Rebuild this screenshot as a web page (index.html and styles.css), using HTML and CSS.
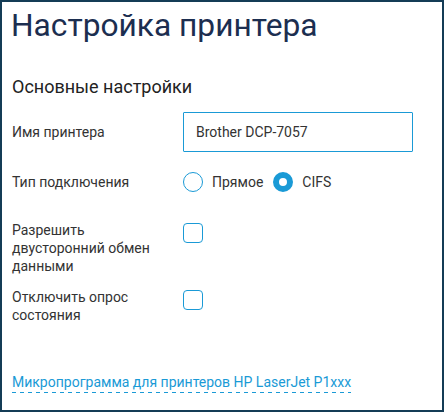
FILE: index.html
```html
<!DOCTYPE html>
<html lang="ru">
<head>
    <meta charset="UTF-8">
    <title>Настройка принтера</title>
    <link rel="stylesheet" href="styles.css">
</head>
<body>
    <div class="panel">
        <h1>Настройка принтера</h1>
        <h2>Основные настройки</h2>

        <div class="row row-name">
            <label class="caption" for="printerName">Имя принтера</label>
            <input type="text" id="printerName" class="field" value="Brother DCP-7057">
        </div>

        <div class="row row-type">
            <span class="caption">Тип подключения</span>
            <div class="choices">
                <label class="choice"><span class="radio"></span>Прямое</label>
                <label class="choice"><span class="radio checked"></span>CIFS</label>
            </div>
        </div>

        <div class="row row-check">
            <span class="caption">Разрешить двусторонний обмен данными</span>
            <span class="box"></span>
        </div>

        <div class="row row-check">
            <span class="caption">Отключить опрос состояния</span>
            <span class="box"></span>
        </div>

        <a href="#" class="firmware">Микропрограмма для принтеров HP LaserJet P1xxx</a>
    </div>
</body>
</html>
```

FILE: styles.css
```css
html, body {
    margin: 0;
    padding: 0;
    background-color: #ffffff;
}

body {
    font-family: Roboto, "Noto Sans", sans-serif;
    color: #333333;
}

.panel {
    box-sizing: border-box;
    width: 444px;
    height: 412px;
    border: 2px solid #143c56;
    padding: 0 10px 0 10px;
}

h1 {
    margin: 4px 0 0 -1px;
    font-size: 31.7px;
    font-weight: 400;
    line-height: 40px;
    color: #1c2e50;
}

h2 {
    margin: 30px 0 14px 0;
    font-size: 18px;
    font-weight: 400;
    line-height: 22px;
    color: #222222;
}

.row {
    display: grid;
    grid-template-columns: 171px 1fr;
    align-items: start;
}

.caption {
    font-size: 14px;
    line-height: 18px;
    color: #333333;
    max-width: 150px;
}

.row-name {
    align-items: center;
    height: 40px;
}

.field {
    box-sizing: border-box;
    width: 230px;
    height: 40px;
    border: 1px solid #1a9ad6;
    border-radius: 1px;
    padding: 0 12px;
    font-family: Roboto, "Noto Sans", sans-serif;
    font-size: 14px;
    color: #333333;
    outline: none;
}

.row-type {
    align-items: center;
    margin-top: 20px;
    height: 20px;
}

.choices {
    display: flex;
    align-items: center;
    gap: 10px;
}

.choice {
    display: flex;
    align-items: center;
    gap: 9px;
    font-size: 14px;
    color: #333333;
}

.radio {
    box-sizing: border-box;
    width: 20px;
    height: 20px;
    border: 1px solid #1a9ad6;
    border-radius: 50%;
    background-color: #ffffff;
}

.radio.checked {
    border: 6px solid #1a9ad6;
}

.row-check {
    margin-top: 29px;
}

.row-check + .row-check {
    margin-top: 13px;
}

.box {
    box-sizing: border-box;
    width: 20px;
    height: 20px;
    border: 1px solid #1a9ad6;
    border-radius: 4px;
    margin-top: 2px;
}

.firmware {
    display: inline-block;
    margin-top: 49px;
    padding-bottom: 2px;
    font-size: 14px;
    line-height: 18px;
    color: #1a9ad6;
    text-decoration: none;
    background-image: linear-gradient(to right, #1a9ad6 50%, transparent 50%);
    background-size: 8px 1px;
    background-repeat: repeat-x;
    background-position: 0 100%;
}
```
